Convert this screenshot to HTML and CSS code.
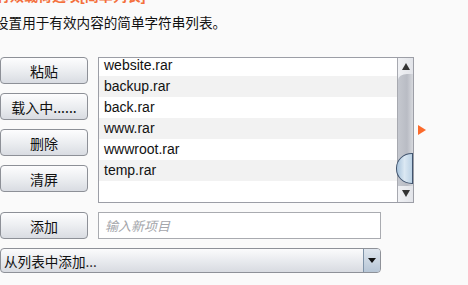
FILE: index.html
```html
<!DOCTYPE html>
<html lang="zh-CN">
<head>
    <meta charset="UTF-8">
    <title>有效载荷选项</title>
    <link rel="stylesheet" href="styles.css">
</head>
<body>
    <div class="panel">
        <h2 class="title">有效载荷选项[简单列表]</h2>
        <p class="desc">设置用于有效内容的简单字符串列表。</p>

        <div class="list-area">
            <div class="btn-col">
                <button class="btn">粘贴</button>
                <button class="btn">载入中......</button>
                <button class="btn">删除</button>
                <button class="btn">清屏</button>
            </div>

            <div class="list-box">
                <ul class="items">
                    <li>website.rar</li>
                    <li>backup.rar</li>
                    <li>back.rar</li>
                    <li>www.rar</li>
                    <li>wwwroot.rar</li>
                    <li>temp.rar</li>
                    <li></li>
                </ul>
                <div class="scrollbar">
                    <span class="sb-btn up"></span>
                    <span class="sb-track"><span class="sb-thumb"></span></span>
                    <span class="sb-btn down"></span>
                </div>
            </div>

            <span class="marker"></span>
        </div>

        <div class="add-row">
            <button class="btn">添加</button>
            <input class="new-item" type="text" placeholder="输入新项目">
        </div>

        <div class="combo">
            <span class="combo-text">从列表中添加...</span>
            <span class="combo-arrow"></span>
        </div>
    </div>
</body>
</html>
```

FILE: styles.css
```css
body {
    margin: 0;
    background: #fafafa;
    font-family: "Liberation Sans", "Noto Sans CJK SC", sans-serif;
    overflow: hidden;
}

.panel {
    width: 468px;
    height: 285px;
    padding-top: 1px;
}

.title {
    margin: -15px 0 0 -4px;
    height: 20px;
    line-height: 20px;
    font-size: 14px;
    font-weight: bold;
    color: #f4703c;
}

.desc {
    margin: 8px 0 0 -5px;
    height: 20px;
    line-height: 20px;
    font-size: 13.6px;
    color: #111;
}

/* --- list with buttons --- */
.list-area {
    display: flex;
    align-items: flex-start;
    margin-top: 23px;
}

.btn-col {
    display: flex;
    flex-direction: column;
    gap: 9px;
    width: 88px;
}

.btn {
    height: 27px;
    width: 88px;
    padding: 0;
    border: 1px solid #8d9097;
    border-radius: 4px;
    background: linear-gradient(#fdfdfe, #eceef1 50%, #d9dce2);
    font-family: "Noto Sans CJK SC", sans-serif;
    font-size: 14px;
    color: #111;
}

.list-box {
    display: flex;
    margin-left: 10px;
    width: 314px;
    height: 144px;
    border: 1px solid #9c9ea6;
    background: #fff;
}

.items {
    flex: 1;
    margin: 0;
    padding: 0;
    list-style: none;
    overflow: hidden;
}

.items li {
    height: 21px;
    line-height: 21px;
    padding-left: 5px;
    font-size: 14px;
    color: #111;
}

.items li:first-child { margin-top: -3px; }
.items li:nth-child(even) { background: #f2f2f2; }

.scrollbar {
    display: flex;
    flex-direction: column;
    width: 15px;
    border-left: 1px solid #a7a9b0;
    background: #eceef2;
}

.sb-btn {
    position: relative;
    height: 16px;
    background: linear-gradient(90deg, #f0f1f4, #e2e4e9);
}

.sb-btn::after {
    content: "";
    position: absolute;
    left: 4px;
    border-left: 4px solid transparent;
    border-right: 4px solid transparent;
}

.sb-btn.up::after { top: 5px; border-bottom: 7px solid #333; }
.sb-btn.down::after { top: 4px; border-top: 7px solid #333; }

.sb-track {
    position: relative;
    flex: 1;
    background: linear-gradient(90deg, #c5c8cf, #b9bcc4 60%, #d7d9de);
    border-top-left-radius: 9px 6px;
}

.sb-thumb {
    position: absolute;
    left: -2px;
    right: 0;
    bottom: 2px;
    height: 29px;
    border: 1px solid #41546e;
    border-radius: 16px 0 0 16px / 15px 0 0 15px;
    background: linear-gradient(90deg, #a9c4dc, #dbe8f3 50%, #bcd2e5);
}

.marker {
    margin: 68px 0 0 4px;
    border-top: 5px solid transparent;
    border-bottom: 5px solid transparent;
    border-left: 8px solid #fb6a2b;
}

/* --- add row --- */
.add-row {
    display: flex;
    gap: 10px;
    margin-top: 9px;
}

.new-item {
    box-sizing: border-box;
    width: 283px;
    height: 27px;
    margin: 0;
    padding: 0 6px;
    border: 1px solid #a9abb0;
    background: #fff;
    font-family: "Noto Sans CJK SC", sans-serif;
    font-size: 13px;
}

.new-item::placeholder {
    color: #a4a6ab;
    font-style: italic;
}

.combo {
    box-sizing: border-box;
    display: flex;
    align-items: center;
    width: 381px;
    height: 25px;
    margin-top: 9px;
    border: 1px solid #8e9198;
    border-radius: 4px;
    background: linear-gradient(#fbfbfc, #e9ebef 50%, #d8dbe1);
    overflow: hidden;
}

.combo-text {
    flex: 1;
    padding-left: 3px;
    font-family: "Noto Sans CJK SC", sans-serif;
    font-size: 13.6px;
    color: #111;
}

.combo-arrow {
    position: relative;
    width: 16px;
    height: 100%;
    border-left: 1px solid #7f93a8;
    background: linear-gradient(#dfe6ee, #b7c6d6);
}

.combo-arrow::after {
    content: "";
    position: absolute;
    left: 4px;
    top: 9px;
    border-left: 4px solid transparent;
    border-right: 4px solid transparent;
    border-top: 5px solid #111;
}
```
